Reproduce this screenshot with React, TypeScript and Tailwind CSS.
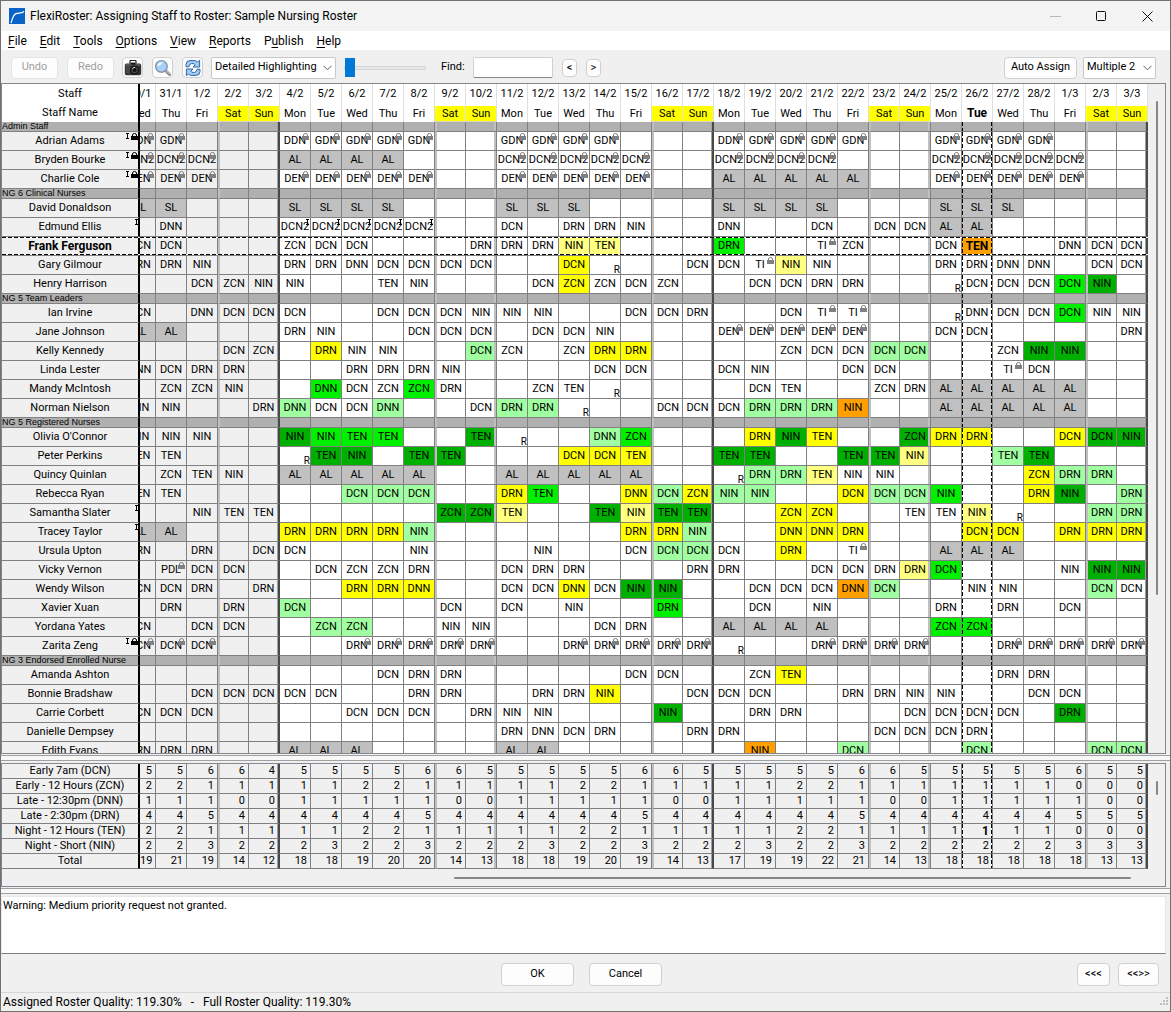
import { useState } from 'react'
import clsx from 'clsx'

// "5:DCN,DRN-y" puts DCN on day 5 and a yellow DRN on day 6
// + is a locked shift, ^ an imported one, R a pending request
type Row = { name: string; shifts: string; marks?: string }
type Group = { title: string; rows: Row[] }

const GROUPS: Group[] = [
  {
    title: 'Admin Staff',
    rows: [
      { name: 'Adrian Adams', marks: '^+', shifts: '0:GDN+,GDN+ 5:DDN+,GDN+,GDN+,GDN+,GDN+ 12:GDN+,GDN+,GDN+,GDN+ 19:DDN+,GDN+,GDN+,GDN+,GDN+ 26:GDN+,GDN+,GDN+,GDN+' },
      { name: 'Bryden Bourke', marks: '^+', shifts: '0:DCN2+,DCN2+,DCN2+ 5:AL,AL,AL,AL 12:DCN2+,DCN2+,DCN2+,DCN2+,DCN2+ 19:DCN2+,DCN2+,DCN2+,DCN2+ 26:DCN2+,DCN2+,DCN2+,DCN2+,DCN2+' },
      { name: 'Charlie Cole', marks: '^+', shifts: '0:DEN+,DEN+,DEN+ 5:DEN+,DEN+,DEN+,DEN+,DEN+ 12:DEN+,DEN+,DEN+,DEN+,DEN+ 19:AL,AL,AL,AL,AL 26:DEN+,DEN+,DEN+,DEN+,DEN+' },
    ],
  },
  {
    title: 'NG 6 Clinical Nurses',
    rows: [
      { name: 'David Donaldson', shifts: '0:SL,SL 5:SL,SL,SL,SL 12:SL,SL,SL 19:SL,SL,SL,SL 26:SL,SL,SL' },
      { name: 'Edmund Ellis', marks: '^', shifts: '1:DNN 5:DCN2^,DCN2^,DCN2^,DCN2^,DCN2^ 12:DCN 14:DRN,DRN,NIN 19:DNN 22:DCN 24:DCN,DCN,AL,AL' },
      { name: 'Frank Ferguson', shifts: '0:DCN,DCN 5:ZCN,DCN,DCN 11:DRN,DRN,DRN,NIN-p,TEN-p 19:DRN-g 22:TI+,ZCN 26:DCN,TEN-o 30:DNN,DCN,DCN' },
      { name: 'Gary Gilmour', shifts: '0:DRN,DRN,NIN 5:DRN,DRN,DNN,DCN,DCN,DCN,DCN 14:DCN-y,R 18:DCN,DCN,TI+,NIN-p,NIN 26:DRN,DRN,DNN,DNN 31:DCN,DCN' },
      { name: 'Henry Harrison', shifts: '2:DCN,ZCN,NIN,NIN 8:TEN,NIN 13:DCN,ZCN-y,ZCN,DCN,ZCN 20:DCN,DCN,DRN,DRN 26:R,DCN,DCN,DCN,DCN-g,NIN-d' },
    ],
  },
  {
    title: 'NG 5 Team Leaders',
    rows: [
      { name: 'Ian Irvine', shifts: '0:DCN 2:DNN,DCN,DCN,DCN 8:DCN,DCN,DCN,NIN,NIN,NIN 16:DCN,DCN,DRN 21:DCN,TI+,TI+ 26:R,DNN,DCN,DCN,DCN-g,NIN,NIN' },
      { name: 'Jane Johnson', shifts: '0:AL,AL 5:DRN,NIN 9:DCN,DCN,DCN 13:DCN,DCN,NIN 19:DEN+,DEN+,DEN+,DEN+,DEN+ 26:DCN,DCN 32:DRN' },
      { name: 'Kelly Kennedy', shifts: '3:DCN,ZCN 6:DRN-y,NIN,NIN 11:DCN-l,ZCN 14:ZCN,DRN-y,DRN-y 21:ZCN,DCN,DCN,DCN-l,DCN-l 28:ZCN,NIN-d,NIN-d' },
      { name: 'Linda Lester', shifts: '0:DNN,DCN,DRN,DRN 7:DRN,DRN,DRN,NIN 15:DCN,DCN 19:DCN,NIN 23:DCN,DCN 28:TI+,DCN' },
      { name: 'Mandy McIntosh', shifts: '1:ZCN,ZCN,NIN 6:DNN-g,DCN,ZCN,ZCN-g,DRN 13:ZCN,TEN,R 20:DCN,TEN 24:ZCN,DRN,AL,AL,AL,AL,AL' },
      { name: 'Norman Nielson', shifts: '0:NIN,NIN 4:DRN,DNN-l,DCN,DCN,DNN-l 11:DCN,DRN-l,DRN-l,R 17:DCN,DCN,DCN,DRN-l,DRN-l,DRN-l,NIN-o 26:AL,AL,AL,AL,AL' },
    ],
  },
  {
    title: 'NG 5 Registered Nurses',
    rows: [
      { name: "Olivia O'Connor", shifts: '0:NIN,NIN,NIN 5:NIN-d,NIN-g,TEN-g,TEN-g 11:TEN-d,R 15:DNN-l,ZCN-g 20:DRN-y,NIN-d,TEN-y 25:ZCN-d,DRN-y,DRN-y 30:DCN-y,DCN-d,NIN-d' },
      { name: 'Peter Perkins', shifts: '0:TEN,TEN 5:R,TEN-d,NIN-d 9:TEN-d,TEN-d 14:DCN-y,DCN-y,TEN-y 19:TEN-d,TEN-d 23:TEN-d,TEN-d,NIN-p 28:TEN-l,TEN-d' },
      { name: 'Quincy Quinlan', shifts: '1:ZCN,TEN,NIN 5:AL,AL,AL,AL,AL 12:AL,AL,AL,AL,AL 19:R,DRN-l,DRN-l,TEN-p,NIN,NIN 29:ZCN-y,DRN-l,DRN-l' },
      { name: 'Rebecca Ryan', shifts: '0:TEN,TEN 7:DCN-l,DCN-l,DCN-l 12:DRN-y,TEN-g 16:DNN-y,DCN-l,ZCN-y,NIN-l,NIN-l 23:DCN-y,DCN-l,DCN-l,NIN-g 29:DRN-y,NIN-d 32:DRN-l' },
      { name: 'Samantha Slater', marks: '^', shifts: '2:NIN,TEN,TEN 10:ZCN-d,ZCN-d,TEN-p 15:TEN-d,NIN-p,TEN-d,TEN-d 21:ZCN-y,ZCN-y 25:TEN,TEN,NIN-p,R 31:DRN-l,DRN-l' },
      { name: 'Tracey Taylor', marks: '^', shifts: '0:AL,AL 5:DRN-y,DRN-y,DRN-y,DRN-y,NIN-l 16:DRN-y,DRN-y,NIN-l 21:DNN-y,DNN-y,DRN-y 27:DCN-y,DCN-y 30:DRN-y,DRN-y,DRN-y' },
      { name: 'Ursula Upton', shifts: '0:DRN 2:DRN 4:DCN,DCN 9:NIN 13:NIN 16:DCN,DCN-l,DCN-l,DCN 21:DRN-y 23:TI+ 26:AL,AL,AL' },
      { name: 'Vicky Vernon', shifts: '1:PDL+,DCN,DCN 6:DCN,ZCN,ZCN,DRN 12:DCN,DRN,DRN 18:DRN,DRN 22:DCN,DCN,DRN,DRN-p,DCN-g 30:NIN,NIN-d,NIN-d' },
      { name: 'Wendy Wilson', shifts: '0:DCN,DCN,DRN 4:DRN 7:DRN-y,DRN-y,DNN-y 12:DCN,DCN,DNN-y,DCN,NIN-d,NIN-d 20:DCN,DCN,DCN,DNN-o,DCN-l 27:NIN,NIN 31:DCN-l,DCN' },
      { name: 'Xavier Xuan', shifts: '1:DRN 3:DRN 5:DCN-l 10:DCN 12:DCN 14:NIN 17:DRN-g 20:DCN 22:NIN 26:DRN 28:DRN 30:DCN' },
      { name: 'Yordana Yates', shifts: '0:DCN 2:DCN,DCN 6:ZCN-l,ZCN-l 10:NIN,NIN 15:DCN,DRN 19:AL,AL,AL,AL 26:ZCN-g,ZCN-g' },
      { name: 'Zarita Zeng', marks: '^+', shifts: '0:DCN+,DCN+,DCN+ 7:DRN+,DRN+,DRN+,DRN+,DRN+ 14:DRN+,DRN+,DRN+,DRN+,DRN+,R 22:DRN+,DRN+,DRN+,DRN+ 28:DRN+,DRN+,DRN+,DRN+,DRN+' },
    ],
  },
  {
    title: 'NG 3 Endorsed Enrolled Nurse',
    rows: [
      { name: 'Amanda Ashton', shifts: '8:DCN,DRN,DRN 16:DCN,DCN 20:ZCN,TEN-y 28:DRN,DRN' },
      { name: 'Bonnie Bradshaw', shifts: '2:DCN,DCN,DCN,DCN,DCN 9:DRN,DRN 13:DRN,DRN,NIN-y 18:DCN,DCN,DCN 23:DRN,DRN,NIN,NIN 29:DCN,DCN' },
      { name: 'Carrie Corbett', shifts: '0:DCN,DCN,DCN 7:DCN,DCN,DCN 11:DRN,NIN,NIN 17:NIN-d 20:DRN,DRN 25:DCN,DCN,DCN,DCN 30:DRN-d' },
      { name: 'Danielle Dempsey', shifts: '12:DRN,DNN,DCN,DRN 18:DRN,DRN 24:DCN,DCN,DCN,DRN' },
      { name: 'Edith Evans', shifts: '0:DRN,DRN,DRN 5:AL,AL,AL 12:AL,AL 20:NIN-o 23:DCN-l 27:DCN-l 31:DCN-l,DCN-l' },
    ],
  },
]

const TOTALS = [
  { name: 'Early 7am (DCN)', counts: '5 5 6 6 4 5 5 5 5 6 6 5 5 5 5 5 6 6 5 5 5 5 5 6 6 5 5 5 5 5 6 5 5' },
  { name: 'Early - 12 Hours (ZCN)', counts: '2 2 1 1 1 1 1 2 2 1 1 1 1 1 2 2 1 1 1 1 1 2 2 1 1 1 1 1 1 1 0 0 0' },
  { name: 'Late - 12:30pm (DNN)', counts: '1 1 1 0 0 1 1 1 1 1 0 0 1 1 1 1 1 0 0 1 1 1 1 1 0 0 1 1 1 1 1 0 0' },
  { name: 'Late - 2:30pm (DRN)', counts: '4 4 5 4 4 4 4 4 4 5 4 4 4 4 4 4 5 4 4 4 4 4 4 5 4 4 4 4 4 4 5 5 5' },
  { name: 'Night - 12 Hours (TEN)', counts: '2 2 1 1 1 1 1 2 2 1 1 1 1 1 2 2 1 1 1 1 1 2 2 1 1 1 1 1 1 1 0 0 0' },
  { name: 'Night - Short (NIN)', counts: '2 2 3 2 2 2 3 2 2 3 2 2 2 3 2 2 3 2 2 2 3 2 2 3 2 2 2 2 2 2 3 3 3' },
  { name: 'Total', counts: '19 21 19 14 12 18 18 19 20 20 14 13 18 18 19 20 19 14 13 17 19 19 22 21 14 13 18 18 18 18 18 13 13' },
]

const WEEKDAYS = ['Mon', 'Tue', 'Wed', 'Thu', 'Fri', 'Sat', 'Sun']

const DAYS = Array.from({ length: 33 }, (_, i) => {
  const d = new Date(2019, 0, 30 + i)
  return { date: `${d.getDate()}/${d.getMonth() + 1}`, weekday: WEEKDAYS[(i + 2) % 7] }
})

const SELECTED_DAY = 27
const SELECTED_NAME = 'Frank Ferguson'
const ROSTER_START = 5

const COLORS: Record<string, string> = {
  y: 'bg-[#ffff00]',
  p: 'bg-[#ffff80]',
  g: 'bg-[#00f000]',
  d: 'bg-[#00b000]',
  l: 'bg-[#a0ffa0]',
  o: 'bg-[#ffa000]',
}

const MENUS = [
  ['', 'F', 'ile'],
  ['', 'E', 'dit'],
  ['', 'T', 'ools'],
  ['', 'O', 'ptions'],
  ['', 'V', 'iew'],
  ['', 'R', 'eports'],
  ['P', 'u', 'blish'],
  ['', 'H', 'elp'],
]

const UI_TEXT = 'text-[12px]'
const BOLD = 'font-bold text-[12px]'
const BUTTON = 'rounded-[4px] border border-[#d0d0d0] bg-[#fdfdfd] text-center'

function parseShifts(text: string) {
  const cells: string[] = Array(33).fill('')
  text.split(' ').forEach(run => {
    const [start, codes] = run.split(':')
    codes.split(',').forEach((code, i) => { cells[Number(start) + i] = code })
  })
  return cells
}

function dayBorder(i: number) {
  const day = DAYS[i].weekday
  if (day === 'Sat') return 'border-l-2 border-l-[#c0c0c0] border-r border-r-[#808080]'
  if (day === 'Sun' && (i === 4 || i === 18 || i === 32)) return 'border-r-2 border-r-[#484848] shadow-[inset_-1px_0_0_#a0a0a0]'
  if (day === 'Sun') return 'border-r border-r-[#808080] shadow-[inset_-2px_0_0_#c0c0c0]'
  return 'border-r border-r-[#808080]'
}

const SELECTED_COLUMN =
  "before:content-[''] before:absolute before:inset-y-0 before:left-0 before:w-px before:bg-[repeating-linear-gradient(180deg,#000_0_4px,transparent_4px_6px)] " +
  "after:content-[''] after:absolute after:inset-y-0 after:right-0 after:w-px after:bg-[repeating-linear-gradient(180deg,#000_0_4px,transparent_4px_6px)]"

const DASHES = 'absolute inset-x-0 z-10 h-px bg-[repeating-linear-gradient(90deg,#000_0_4px,#fff_4px_6px)]'

function Lock({ className }: { className: string }) {
  return (
    <svg width="7" height="7" viewBox="0 0 7 7" className={className} aria-hidden="true">
      <path d="M1.5 3.5V2Q1.5 .5 3.5 .5T5.5 2v1.5" fill="none" stroke="currentColor" />
      <path d="M0 3h7v4H0z" fill="currentColor" />
    </svg>
  )
}

function Imported({ className }: { className: string }) {
  return (
    <svg width="3" height="6" viewBox="0 0 3 6" className={className} aria-hidden="true">
      <path d="M0 .5h3M1.5 0v6M0 5.5h3" stroke="#000" fill="none" />
    </svg>
  )
}

function Columns() {
  return (
    <colgroup>
      <col className="w-[138px]" />
      <col className="w-[16px]" />
      {DAYS.slice(1).map(d => <col key={d.date} />)}
    </colgroup>
  )
}

// The first day is half scrolled under the name column
function CellText({ first, children }: { first: boolean; children: React.ReactNode }) {
  if (!first) return <>{children}</>
  return (
    <div className="flex justify-end overflow-hidden">
      <div className="w-[30px] shrink-0 flex justify-center">{children}</div>
    </div>
  )
}

function ShiftCell({ code, day, selected }: { code: string; day: number; selected: boolean }) {
  const [label, color] = code.replace(/[+^]/, '').split('-')
  const leave = label === 'AL' || label === 'SL'
  const bg = color ? COLORS[color] : leave ? 'bg-[#c0c0c0]' : day < ROSTER_START ? 'bg-[#f0f0f0]' : 'bg-white'
  return (
    <td
      className={clsx(
        'relative h-[19px] p-0 border-b border-b-[#808080] text-center whitespace-nowrap',
        dayBorder(day),
        bg,
        day === SELECTED_DAY && SELECTED_COLUMN,
        selected && day === SELECTED_DAY && BOLD,
      )}
    >
      {label === 'R' ? (
        <span className="absolute right-0 bottom-0 text-[10px] leading-[8px]">R</span>
      ) : (
        <CellText first={day === 0}>
          <span className="inline-flex w-full justify-center">{label}</span>
        </CellText>
      )}
      {code.endsWith('+') && <Lock className="absolute top-px right-px text-[#808080]" />}
      {code.endsWith('^') && <Imported className="absolute top-px right-px" />}
    </td>
  )
}

function Roster() {
  return (
    <table className="w-full table-fixed border-separate border-spacing-0 leading-[18px]">
      <Columns />
      <thead>
        <tr>
          <th className="h-[19px] p-0 bg-white font-normal border-r-2 border-black">Staff</th>
          {DAYS.map((d, i) => (
            <th key={d.date} className="h-[19px] p-0 bg-white font-normal border-r border-[#e0e0e0] whitespace-nowrap">
              <CellText first={i === 0}>{d.date}</CellText>
            </th>
          ))}
        </tr>
        <tr>
          <th className="h-[19px] p-0 bg-white font-normal border-r-2 border-black">Staff Name</th>
          {DAYS.map((d, i) => (
            <th
              key={d.date}
              className={clsx(
                'h-[19px] p-0 bg-white border-r border-[#e0e0e0] leading-[15px]',
                i === SELECTED_DAY ? BOLD : 'font-normal',
              )}
            >
              <div className={clsx('border-t-2 border-b', d.weekday[0] === 'S' ? 'bg-[#ffff00] border-t-white border-b-[#d8d4c0]' : 'border-white')}>
                <CellText first={i === 0}>{d.weekday}</CellText>
              </div>
            </th>
          ))}
        </tr>
      </thead>
      {GROUPS.map(g => (
        <tbody key={g.title}>
          <tr>
            <th className="h-[10px] p-0 bg-[#b0b0b0] border-b border-b-[#808080] border-r-2 border-r-black text-left font-normal text-[9px] leading-[9px] font-['Liberation_Sans',sans-serif] whitespace-nowrap">
              {g.title}
            </th>
            {DAYS.map((d, i) => (
              <td
                key={d.date}
                className={clsx(
                  'relative h-[10px] p-0 bg-[#b0b0b0] border-b border-b-[#808080]',
                  dayBorder(i),
                  i === SELECTED_DAY && SELECTED_COLUMN,
                )}
              />
            ))}
          </tr>
          {g.rows.map(r => {
            const selected = r.name === SELECTED_NAME
            return (
              <tr key={r.name} className="relative">
                <th
                  className={clsx(
                    'h-[19px] p-0 bg-[#f0f0f0] border-b border-b-[#808080] border-r-2 border-r-black whitespace-nowrap',
                    selected ? BOLD : 'relative font-normal',
                  )}
                >
                  {selected && <span className={clsx(DASHES, 'top-0')} />}
                  {selected && <span className={clsx(DASHES, 'bottom-px')} />}
                  {r.name}
                  {r.marks && (
                    <span className="absolute top-px right-0 flex gap-0.5">
                      <Imported className="block" />
                      {r.marks.includes('+') && <Lock className="block text-black" />}
                    </span>
                  )}
                </th>
                {parseShifts(r.shifts).map((code, i) => (
                  <ShiftCell key={i} code={code} day={i} selected={selected} />
                ))}
              </tr>
            )
          })}
        </tbody>
      ))}
    </table>
  )
}

function Totals() {
  return (
    <table className="w-full table-fixed border-separate border-spacing-0 leading-[14px]">
      <Columns />
      <tbody>
        {TOTALS.map(t => (
          <tr key={t.name}>
            <th className="h-[15px] p-0 font-normal border-b border-b-[#808080] border-r-2 border-r-black whitespace-nowrap">
              {t.name}
            </th>
            {t.counts.split(' ').map((n, i) => (
              <td
                key={i}
                className={clsx(
                  'relative h-[15px] p-0 pr-[3px] border-b border-b-[#808080] text-right',
                  dayBorder(i),
                  i === SELECTED_DAY && SELECTED_COLUMN,
                  i === SELECTED_DAY && t.name.includes('TEN') && BOLD,
                )}
              >
                {n}
              </td>
            ))}
          </tr>
        ))}
      </tbody>
    </table>
  )
}

function Dropdown({ label, options, className }: { label: string; options: string[]; className: string }) {
  return (
    <div className={clsx('relative h-[22px]', className)}>
      <select
        aria-label={label}
        className="w-full h-full appearance-none rounded-[2px] border border-[#c8c8c8] bg-white pl-[3px] pr-3"
      >
        {options.map(o => <option key={o}>{o}</option>)}
      </select>
      <svg width="9" height="6" viewBox="0 0 9 6" className="absolute right-1 top-2 pointer-events-none" aria-hidden="true">
        <path d="M.5 .8l4 4 4-4" fill="none" stroke="#606060" />
      </svg>
    </div>
  )
}

function CameraIcon() {
  return (
    <svg width="18" height="16" viewBox="0 0 18 16" aria-hidden="true">
      <path d="M6 3.5V1.2Q6 .5 6.7 .5h4.6q.7 0 .7 .7v2.3" fill="none" stroke="#222" strokeWidth="1.2" />
      <path d="M.8 5.2Q.8 3.6 2.4 3.6h13.2q1.6 0 1.6 1.6v8.2q0 1.8-1.6 1.8H2.4q-1.6 0-1.6-1.8z" fill="#333" />
      <path d="M1.6 5h14.8" stroke="#777" />
      <path d="M3 5.6v8M5 6.4v7" stroke="#5c5c5c" />
      <path d="M6.6 2.6h4.8v2H6.6z" fill="#111" />
      <circle cx="10.6" cy="10" r="4.6" fill="#111" />
      <circle cx="10.6" cy="10" r="3.3" fill="#4a4a4a" />
      <circle cx="10.6" cy="10" r="2" fill="#111" />
      <path d="M8.6 8.8q.8-1.6 2.4-1.5" fill="none" stroke="#ddd" />
    </svg>
  )
}

function ZoomIcon() {
  return (
    <svg width="18" height="18" viewBox="0 0 18 18" aria-hidden="true">
      <path d="M11.5 11.5l4 4" stroke="#8b8b8b" strokeWidth="3" strokeLinecap="round" />
      <path d="M12 11.5l3.6 3.6" stroke="#d5d5d5" strokeLinecap="round" />
      <circle cx="7.4" cy="7.4" r="5.8" fill="#a8d0f6" stroke="#8796ab" strokeWidth="1.4" />
      <path d="M3.4 7.6A4.2 4.2 0 0 1 9 3.4Q6.4 6.800 3.4 7.600z" fill="#eaf5ff" />
    </svg>
  )
}

function RefreshIcon() {
  return (
    <svg width="18" height="18" viewBox="0 0 18 18" aria-hidden="true">
      <g fill="#a4ccf2" stroke="#2f66a8" strokeLinejoin="round">
        <path d="M2 7.800V5.400Q2 1.600 6 1.600H10.500Q12.500 1.600 13.400 3L15.600 1.400V8H9l2.200-2.200Q10.600 4.600 9 4.600H7.400Q5.400 4.600 5 7.800z" />
        <path d="M16 10.200v2.400Q16 16.400 12 16.400H7.500Q5.500 16.400 4.600 15L2.400 16.600V10H9l-2.200 2.200Q7.400 13.400 9 13.400h1.600Q12.600 13.400 13 10.200z" />
      </g>
    </svg>
  )
}

function Splitter() {
  return (
    <div className="shrink-0 h-[9px] py-px">
      <div className="h-[6px] border-y border-[#a0a0a0] bg-[#f8f8f8]" />
    </div>
  )
}

export default function App() {
  const [find, setFind] = useState('')
  const [level, setLevel] = useState(0)

  return (
    <div className="h-screen flex flex-col overflow-hidden border border-[#707070] bg-[#f0f0f0] text-[11px] text-black font-['Roboto','Liberation_Sans',sans-serif]">
      <header className="shrink-0 h-[30px] flex items-center pl-2 bg-[#f3f3f3]">
        <svg width="16" height="16" viewBox="0 0 16 16" aria-hidden="true">
          <path d="M0 0h16v16H0z" fill="#0a64c8" />
          <path d="M2 15C3.6 10.500 4 6.800 7 5.600S12 6 15 3.500" fill="none" stroke="#fff" strokeWidth="1.200" />
        </svg>
        <h1 className={clsx('ml-[5px] flex-1', UI_TEXT)}>FlexiRoster: Assigning Staff to Roster: Sample Nursing Roster</h1>
        <button aria-label="Minimize" className="w-[46px] flex justify-center">
          <svg width="11" height="11" viewBox="0 0 11 11"><path d="M0 5.500h11" stroke="#b8b8b8" /></svg>
        </button>
        <button aria-label="Maximize" className="w-[46px] flex justify-center">
          <svg width="11" height="11" viewBox="0 0 11 11"><rect x=".5" y=".5" width="9" height="9" rx="1" fill="none" stroke="#111" /></svg>
        </button>
        <button aria-label="Close" className="w-[46px] flex justify-center">
          <svg width="11" height="11" viewBox="0 0 11 11"><path d="M.5 .5l10 10M10.500 .5l-10 10" stroke="#111" /></svg>
        </button>
      </header>

      <nav className={clsx('shrink-0 h-[19px] flex items-center gap-[13px] pl-[7px] bg-white', UI_TEXT)}>
        {MENUS.map(([before, key, after]) => (
          <button key={before + key + after}>
            {before}<u className="underline-offset-2">{key}</u>{after}
          </button>
        ))}
      </nav>

      <div className="shrink-0 h-[33px] flex items-center pt-0.5 pl-[10px] pr-[14px]">
        <button disabled className={clsx(BUTTON, 'w-[47px] h-[22px] text-[#a0a0a0] border-[#e4e4e4]')}>Undo</button>
        <button disabled className={clsx(BUTTON, 'w-[47px] h-[22px] ml-[9px] text-[#a0a0a0] border-[#e4e4e4]')}>Redo</button>
        <div className="ml-2 flex gap-[9px]">
          <button aria-label="Snapshot" className={clsx(BUTTON, 'size-[21px] flex items-center justify-center')}><CameraIcon /></button>
          <button aria-label="Zoom" className={clsx(BUTTON, 'size-[21px] flex items-center justify-center')}><ZoomIcon /></button>
          <button aria-label="Refresh" className={clsx(BUTTON, 'size-[21px] flex items-center justify-center')}><RefreshIcon /></button>
        </div>
        <Dropdown label="Highlighting" options={['Detailed Highlighting', 'No Highlighting']} className="ml-2 w-[125px]" />
        <input
          type="range"
          aria-label="Highlight level"
          min={0}
          max={10}
          value={level}
          onChange={e => setLevel(Number(e.target.value))}
          className="ml-2 w-[82px] h-5 appearance-none bg-transparent [&::-webkit-slider-runnable-track]:h-1 [&::-webkit-slider-runnable-track]:border [&::-webkit-slider-runnable-track]:border-[#d6d6d6] [&::-webkit-slider-runnable-track]:bg-[#e7eaea] [&::-webkit-slider-thumb]:appearance-none [&::-webkit-slider-thumb]:w-[10px] [&::-webkit-slider-thumb]:h-[19px] [&::-webkit-slider-thumb]:-mt-[9px] [&::-webkit-slider-thumb]:bg-[#0078d7]"
        />
        <label htmlFor="find" className="ml-[15px] w-[32px]">Find:</label>
        <input
          id="find"
          value={find}
          onChange={e => setFind(e.target.value)}
          className="w-[80px] h-[21px] px-1 rounded-[2px] border border-[#d0d0d0] border-b-[#868686] bg-white"
        />
        <button aria-label="Find previous" className={clsx(BUTTON, 'ml-[9px] w-[15px] h-[18px] leading-[16px]')}>&lt;</button>
        <button aria-label="Find next" className={clsx(BUTTON, 'ml-[9px] w-[15px] h-[18px] leading-[16px]')}>&gt;</button>
        <div className="ml-auto flex gap-[6px]">
          <button className={clsx(BUTTON, 'w-[73px] h-[22px]')}>Auto Assign</button>
          <Dropdown label="Assign mode" options={['Multiple 2', 'Multiple 1']} className="w-[73px]" />
        </div>
      </div>

      <main className="flex-1 min-h-0 flex mr-1 border border-[#828790] overflow-hidden">
        <div className="flex-1 min-w-0"><Roster /></div>
        <div className="w-[17px] flex justify-center pt-[17px]">
          <div className="w-[2px] h-[494px] rounded-full bg-[#868686]" />
        </div>
      </main>

      <Splitter />

      <section className="shrink-0 mr-1 border border-[#828790]">
        <div className="flex">
          <div className="flex-1 min-w-0"><Totals /></div>
          <div className="w-[17px] flex justify-center pt-[17px]">
            <div className="w-[2px] h-[14px] rounded-full bg-[#868686]" />
          </div>
        </div>
        <div className="h-[17px] flex items-center justify-end pr-[34px]">
          <div className="w-3/5 h-[2px] rounded-full bg-[#868686]" />
        </div>
      </section>

      <Splitter />

      <textarea
        readOnly
        aria-label="Messages"
        className="shrink-0 block mr-1 h-[58px] resize-none bg-white border border-[#e8e8e8] border-b-[#808080] px-px py-[2px] leading-[14px] outline-none"
        defaultValue="Warning: Medium priority request not granted."
      />

      <footer className="shrink-0 h-[38px] flex items-center pt-[3px] pl-[500px] pr-[11px]">
        <button className={clsx(BUTTON, 'w-[73px] h-[23px]')}>OK</button>
        <button className={clsx(BUTTON, 'w-[73px] h-[23px] ml-[15px]')}>Cancel</button>
        <button className={clsx(BUTTON, 'w-[33px] h-[23px] ml-auto')}>&lt;&lt;&lt;</button>
        <button className={clsx(BUTTON, 'w-[41px] h-[23px] ml-2')}>&lt;&lt;&gt;&gt;</button>
      </footer>

      <div className={clsx('shrink-0 h-[19px] flex items-center justify-between border-t border-[#d7d7d7] pl-[2px] whitespace-pre', UI_TEXT)}>
        <span>Assigned Roster Quality: 119.30%   -   Full Roster Quality: 119.30%</span>
        <svg width="10" height="10" viewBox="0 0 10 10" aria-hidden="true">
          <path d="M6 0h2v2H6zM3 3h2v2H3zM6 3h2v2H6zM0 6h2v2H0zM3 6h2v2H3zM6 6h2v2H6z" fill="#bfbfbf" />
        </svg>
      </div>
    </div>
  )
}
